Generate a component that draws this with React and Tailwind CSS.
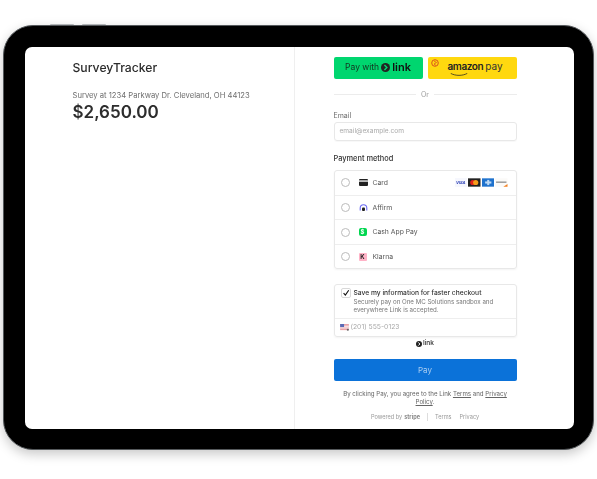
import React from "react";

const sans = "font-['Inter',sans-serif]";

const LinkMark = ({ className, stroke = "#00d66f" }) => (
  <svg viewBox="0 0 12 12" className={className}>
    <circle cx="6" cy="6" r="6" fill="#222" />
    <path d="M4.6 2.8 7.8 6 4.6 9.2" fill="none" stroke={stroke} strokeWidth="1.9" />
  </svg>
);

const CardIcons = () => (
  <div className="flex items-center gap-px">
    <div className="flex h-[9px] w-[12.5px] items-center justify-center bg-[#f6f7fd] text-[4px] font-bold italic leading-none text-[#2a3fb5]">VISA</div>
    <svg viewBox="0 0 12 8" className="h-[9px] w-[12.5px]">
      <rect width="12" height="8" fill="#222" />
      <circle cx="4.6" cy="4" r="2.5" fill="#e2231a" />
      <circle cx="7.4" cy="4" r="2.5" fill="#f79e1b" />
    </svg>
    <svg viewBox="0 0 12 8" className="h-[9px] w-[12.5px]">
      <rect width="12" height="8" fill="#1f72cd" />
      <rect x="3" y="3" width="6" height="2" fill="#bcd9f5" />
      <rect x="5" y="1.5" width="2" height="5" fill="#bcd9f5" />
    </svg>
    <svg viewBox="0 0 12 8" className="h-[9px] w-[12.5px]">
      <rect width="12" height="8" fill="#fbfaf8" />
      <rect x="1" y="3" width="10" height="1.4" fill="#9a9a9a" />
      <path d="M8 8 12 5.5V8Z" fill="#f48120" />
    </svg>
  </div>
);

const CardGlyph = () => (
  <svg viewBox="0 0 9 7" className="h-[7px] w-[9px]">
    <rect width="9" height="7" rx="1" fill="#222" />
    <rect y="1.4" width="9" height="1.3" fill="#fff" />
  </svg>
);

const AffirmGlyph = () => (
  <svg viewBox="0 0 9 9" className="h-[9px] w-[9px]">
    <path d="M1.2 7.5V5A3.3 3.3 0 0 1 7.8 5V7.5" fill="none" stroke="#6a6af4" strokeWidth="1.1" />
    <rect x="3" y="4.4" width="3" height="3.6" rx="1" fill="#222" />
  </svg>
);

const CashGlyph = () => (
  <div className="flex h-[8px] w-[8px] items-center justify-center rounded-[2px] bg-[#00d64f] text-[6px] font-bold leading-none text-white">$</div>
);

const KlarnaGlyph = () => (
  <div className="flex h-[8px] w-[8px] items-center justify-center rounded-[1px] bg-[#ffb3c7] text-[6px] font-bold leading-none text-[#222]">K</div>
);

const methods = [
  { name: "Card", icon: <CardGlyph />, extra: <CardIcons /> },
  { name: "Affirm", icon: <AffirmGlyph /> },
  { name: "Cash App Pay", icon: <CashGlyph /> },
  { name: "Klarna", icon: <KlarnaGlyph /> },
];

export default function App() {
  return (
    <div className={`h-[479px] w-[597px] overflow-hidden bg-white pl-[3px] pt-[25px] ${sans}`}>
      {/* tablet frame */}
      <div className="relative h-[425px] w-[591px] rounded-[30px] border-[1.5px] border-[#55595c] bg-black pb-[19px] pl-[20.5px] pr-[18px] pt-[20.5px] shadow-[0_4px_12px_rgba(0,0,0,0.22)]">
        {/* volume buttons */}
        <div className="absolute left-[46px] top-[-2.5px] flex gap-[8px]">
          <div className="h-[1.5px] w-[24px] rounded-t-[1px] bg-[#b4b7b9]" />
          <div className="h-[1.5px] w-[24px] rounded-t-[1px] bg-[#b4b7b9]" />
        </div>
        <div className="flex h-[382px] w-[549px] overflow-hidden rounded-[7px] bg-white blur-[0.35px]">
          {/* left column */}
          <div className="w-[270px] shrink-0 border-r border-[#efefef] pl-[48px] pt-[12px]">
            <h1 className="text-[12.2px] font-medium leading-[17px] text-[#2b2b2b]">SurveyTracker</h1>
            <p className="mt-[15px] text-[7.65px] leading-[10px] text-[#6f6f6f]">Survey at 1234 Parkway Dr. Cleveland, OH 44123</p>
            <p className="mt-[1px] text-[17px] font-semibold leading-[21px] text-[#2d2d2d]">$2,650.00</p>
          </div>

          {/* right column */}
          <div className="w-[279px] pl-[39px] pr-[57px] pt-[10px]">
            <div className="flex gap-[5px]">
              <div className="flex h-[22px] w-[89px] items-center justify-center gap-[2px] rounded-[2px] bg-[#00d66f] text-[8.5px] text-[#14321f]">
                Pay with
                <LinkMark className="h-[9px] w-[9px]" />
                <span className="text-[11px] font-semibold leading-none text-[#111]">link</span>
              </div>
              <div className="relative flex h-[22px] w-[89px] items-center justify-center rounded-[2px] bg-[#ffd80f] pb-[3px] pl-[6px]">
                <span className="text-[10px] font-semibold tracking-[-0.4px] text-[#222]">amazon</span>
                <span className="ml-[2px] text-[10px] text-[#333]">pay</span>
                <svg viewBox="0 0 8 8" className="absolute left-[3px] top-[2px] h-[8px] w-[8px]">
                  <circle cx="4" cy="4" r="3.3" fill="none" stroke="#d9541e" strokeWidth="1" />
                  <path d="M3 2 5.5 3.5 3 5 5 6.5" fill="none" stroke="#d9541e" strokeWidth="0.8" />
                </svg>
                <svg viewBox="0 0 24 4" className="absolute bottom-[3px] left-[22px] h-[3px] w-[18px]">
                  <path d="M1 0.5C7 4 17 4 23 0.5" fill="none" stroke="#222" strokeWidth="1" />
                </svg>
              </div>
            </div>

            <div className="mt-[11px] flex items-center gap-[5px] text-[7px] leading-[9px] text-[#9a9a9a]">
              <div className="h-px flex-1 bg-[#ececec]" />
              Or
              <div className="h-px flex-1 bg-[#ececec]" />
            </div>

            <label className="mt-[12px] block text-[7px] leading-[9px] text-[#6a6a6a]">Email</label>
            <div className="mt-[2px] flex h-[19px] items-center rounded-[3px] border border-[#e8e8e8] pl-[5px] pt-[1px] text-[6.6px] text-[#a9a9a9] shadow-[0_1px_1px_rgba(0,0,0,0.03)]">
              email@example.com
            </div>

            <p className="mt-[12px] text-[7.4px] font-medium leading-[11px] text-[#333]">Payment method</p>

            <div className="mt-[6px] rounded-[3px] border border-[#e8e8e8] shadow-[0_1px_2px_rgba(0,0,0,0.05)]">
              {methods.map((m, i) => (
                <div key={m.name} className={`flex h-[24.4px] items-center pl-[6px] pr-[8px] pt-[0.5px] ${i > 0 ? "border-t border-[#eeeeee]" : ""}`}>
                  <div className="h-[9px] w-[9px] rounded-full border border-[#bbbbbb]" />
                  <div className="ml-[9px] flex w-[14px] items-center">{m.icon}</div>
                  <span className="text-[6.8px] text-[#555555]">{m.name}</span>
                  {m.extra && <div className="ml-auto">{m.extra}</div>}
                </div>
              ))}
            </div>

            <div className="mt-[15px] rounded-[3px] border border-[#e8e8e8] shadow-[0_1px_2px_rgba(0,0,0,0.05)]">
              <div className="flex h-[33px] items-start pl-[6px] pr-[4px] pt-[3px]">
                <div className="flex h-[10px] w-[10px] shrink-0 items-center justify-center rounded-[2px] border border-[#d8d8d8]">
                  <svg viewBox="0 0 10 10" className="h-[10px] w-[10px]">
                    <path d="M2 5.2 4.2 7.6 8.4 1.6" fill="none" stroke="#111" strokeWidth="1.4" />
                  </svg>
                </div>
                <div className="ml-[3px]">
                  <p className="text-[6.7px] font-medium leading-[10px] text-[#333]">Save my information for faster checkout</p>
                  <p className="text-[6.15px] leading-[8px] text-[#777777]">Securely pay on One MC Solutions sandbox and everywhere Link is accepted.</p>
                </div>
              </div>
              <div className="flex h-[18px] items-center border-t border-[#eeeeee] pl-[5px] text-[6.8px] text-[#a9a9a9]">
                <svg viewBox="0 0 10 8" className="mr-[2px] h-[7px] w-[9px]">
                  <rect width="10" height="7" fill="#e9a3a8" />
                  <rect y="2" width="10" height="1" fill="#fff" />
                  <rect y="4" width="10" height="1" fill="#fff" />
                  <rect width="4.5" height="3.5" fill="#5b6bb5" />
                  <circle cx="8.8" cy="6.6" r="1.2" fill="#666" />
                </svg>
                (201) 555-0123
              </div>
            </div>

            <div className="mt-[2px] flex items-center justify-center gap-px text-[6.5px] font-semibold leading-[9px] text-[#444]">
              <LinkMark className="h-[6px] w-[6px]" stroke="#fff" />
              link
            </div>

            <div className="mt-[11px] flex h-[22px] items-center justify-center rounded-[2px] bg-[#0b72d9] text-[8px] text-[#a9cdf2]">Pay</div>

            <p className="mt-[9px] text-center text-[6.15px] leading-[8px] text-[#666666]">
              By clicking Pay, you agree to the Link <span className="underline">Terms</span> and <span className="underline">Privacy</span> <span className="underline">Policy</span>.
            </p>

            <div className="mt-[7px] flex items-center justify-center text-[5.6px] text-[#999999]">
              Powered by <span className="ml-[2px] font-bold text-[#888888]">stripe</span>
              <div className="mx-[7px] h-[8px] w-px bg-[#dddddd]" />
              <span>Terms</span>
              <span className="ml-[8px]">Privacy</span>
            </div>
          </div>
        </div>
      </div>
    </div>
  );
}
